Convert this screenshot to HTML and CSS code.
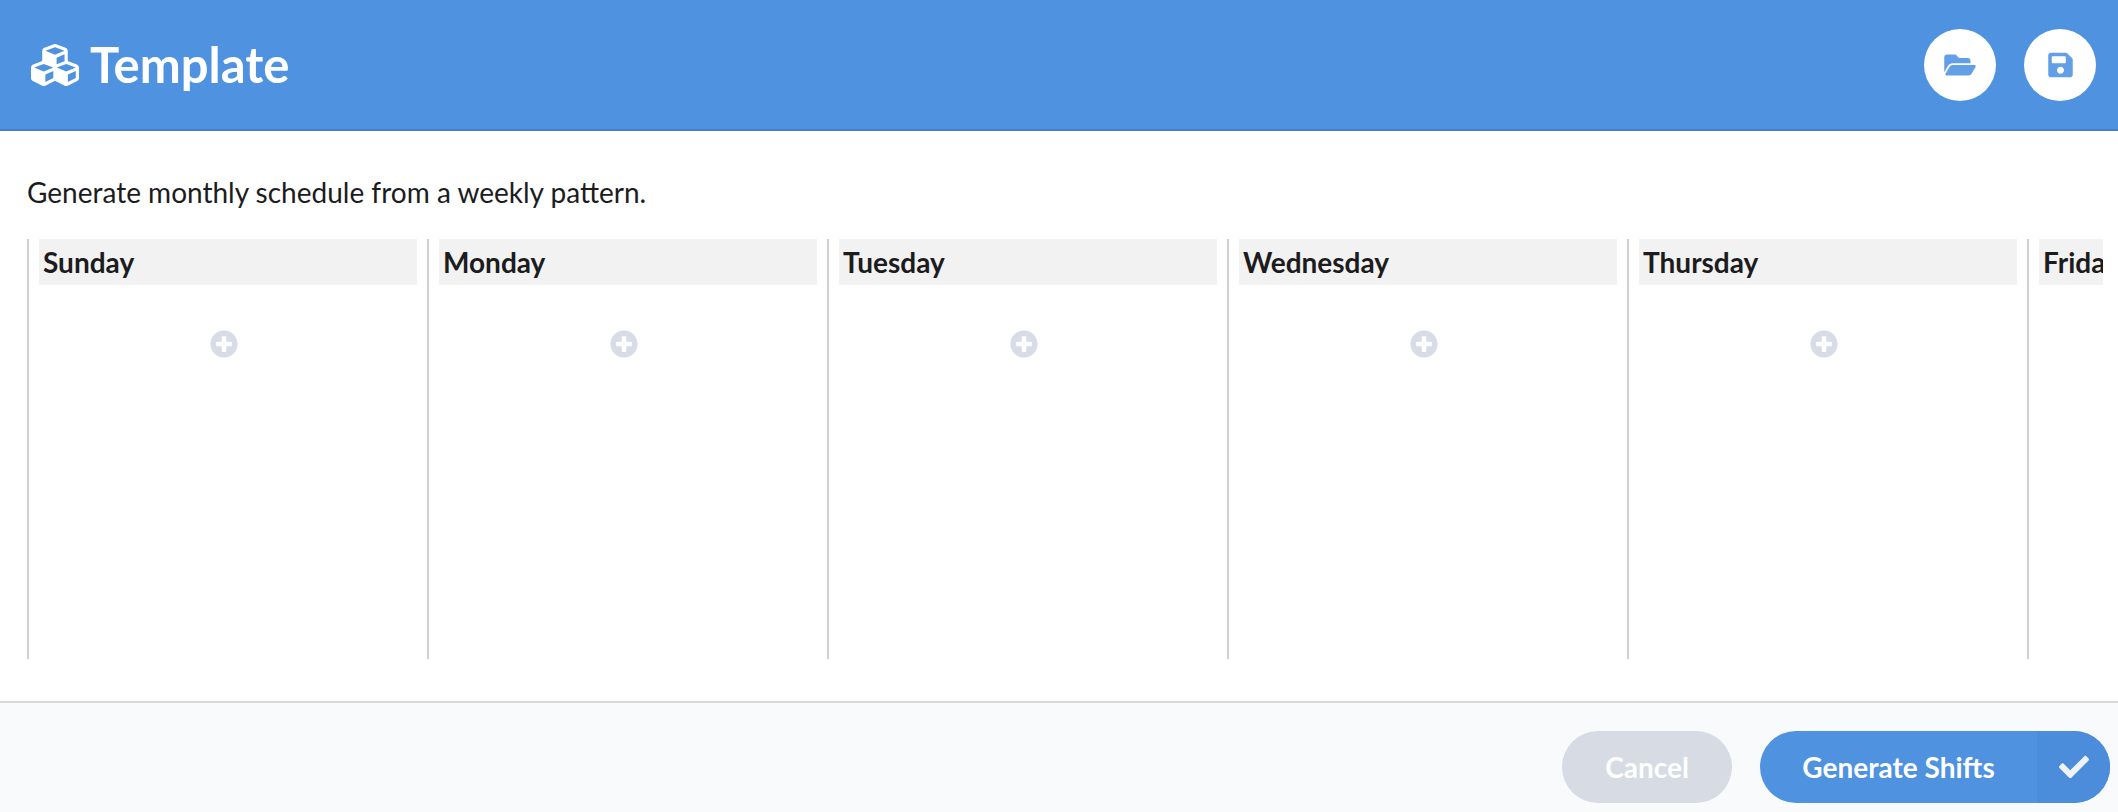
FILE: index.html
```html
<!DOCTYPE html>
<html lang="en">

<head>
    <meta charset="UTF-8">
    <title>Template</title>
    <link rel="stylesheet" href="styles.css">
</head>

<body>
    <div class="page">
        <header class="top_bar">
            <svg class="cubes_icon" viewBox="0 0 512 512">
                <path d="M488.6 250.2L392 214V105.5c0-15-9.3-28.4-23.4-33.7l-100-37.5c-8.1-3.1-17.1-3.1-25.3 0l-100 37.5c-14.1 5.3-23.4 18.7-23.4 33.7V214l-96.6 36.2C9.3 255.5 0 268.9 0 283.9V394c0 13.6 7.7 26.1 19.9 32.2l100 50c10.1 5.1 22.1 5.1 32.2 0l103.9-52 103.9 52c10.1 5.1 22.1 5.1 32.2 0l100-50c12.2-6.1 19.9-18.6 19.9-32.2V283.9c0-15-9.3-28.4-23.4-33.7zM358 214.8l-85 31.9v-68.2l85-37v73.3zM154 104.1l102-38.2 102 38.2v.6l-102 41.4-102-41.4v-.6zm84 291.1l-85 42.5v-79.1l85-38.8v75.4zm0-112l-102 41.4-102-41.4v-.6l102-38.2 102 38.2v.6zm240 112l-85 42.5v-79.1l85-38.8v75.4zm0-112l-102 41.4-102-41.4v-.6l102-38.2 102 38.2v.6z"/>
            </svg>
            <h1 class="title">Template</h1>
            <div class="top_actions">
                <div class="round_btn">
                    <svg class="folder_icon" viewBox="0 0 576 512">
                        <path d="M572.694 292.093L500.27 416.248A63.997 63.997 0 0 1 444.989 448H45.025c-18.523 0-30.064-20.093-20.731-36.093l72.424-124.155A64 64 0 0 1 152 256h399.964c18.523 0 30.064 20.093 20.73 36.093zM152 224h328v-48c0-26.51-21.49-48-48-48H272l-64-64H48C21.49 64 0 85.49 0 112v278.046l69.077-118.418C86.214 242.25 117.989 224 152 224z"/>
                    </svg>
                </div>
                <div class="round_btn">
                    <svg class="save_icon" viewBox="0 0 448 512">
                        <path d="M433.941 129.941l-83.882-83.882A48 48 0 0 0 316.118 32H48C21.49 32 0 53.49 0 80v352c0 26.51 21.49 48 48 48h352c26.51 0 48-21.49 48-48V163.882a48 48 0 0 0-14.059-33.941zM224 416c-35.346 0-64-28.654-64-64 0-35.346 28.654-64 64-64s64 28.654 64 64c0 35.346-28.654 64-64 64zm96-304.52V212c0 6.627-5.373 12-12 12H76c-6.627 0-12-5.373-12-12V108c0-6.627 5.373-12 12-12h228.52c3.183 0 6.235 1.264 8.485 3.515l3.48 3.48A11.996 11.996 0 0 1 320 111.48z"/>
                    </svg>
                </div>
            </div>
        </header>

        <main class="content">
            <p class="intro">Generate monthly schedule from a weekly pattern.</p>
            <div class="week">
                <section class="day">
                    <h2 class="day_name">Sunday</h2>
                    <svg class="add_icon" viewBox="0 0 512 512"><use href="#plus_circle"/></svg>
                </section>
                <section class="day">
                    <h2 class="day_name">Monday</h2>
                    <svg class="add_icon" viewBox="0 0 512 512"><use href="#plus_circle"/></svg>
                </section>
                <section class="day">
                    <h2 class="day_name">Tuesday</h2>
                    <svg class="add_icon" viewBox="0 0 512 512"><use href="#plus_circle"/></svg>
                </section>
                <section class="day">
                    <h2 class="day_name">Wednesday</h2>
                    <svg class="add_icon" viewBox="0 0 512 512"><use href="#plus_circle"/></svg>
                </section>
                <section class="day">
                    <h2 class="day_name">Thursday</h2>
                    <svg class="add_icon" viewBox="0 0 512 512"><use href="#plus_circle"/></svg>
                </section>
                <section class="day">
                    <h2 class="day_name">Friday</h2>
                    <svg class="add_icon" viewBox="0 0 512 512"><use href="#plus_circle"/></svg>
                </section>
            </div>
        </main>

        <footer class="bottom_bar">
            <div class="btn btn_cancel">Cancel</div>
            <div class="btn btn_generate">
                <span class="btn_label">Generate Shifts</span>
                <span class="btn_check">
                    <svg class="check_icon" viewBox="0 0 512 512">
                        <path d="M173.898 439.404l-166.4-166.4c-9.997-9.997-9.997-26.206 0-36.204l36.203-36.204c9.997-9.998 26.207-9.998 36.204 0L192 312.69 432.095 72.596c9.997-9.997 26.207-9.997 36.204 0l36.203 36.204c9.997 9.997 9.997 26.206 0 36.204l-294.4 294.401c-9.998 9.997-26.207 9.997-36.204-.001z"/>
                    </svg>
                </span>
            </div>
        </footer>
    </div>

    <svg class="icon_defs">
        <symbol id="plus_circle" viewBox="0 0 512 512">
            <path d="M256 8C119 8 8 119 8 256s111 248 248 248 248-111 248-248S393 8 256 8zm144 276c0 6.6-5.4 12-12 12h-92v92c0 6.6-5.4 12-12 12h-56c-6.6 0-12-5.4-12-12v-92h-92c-6.6 0-12-5.4-12-12v-56c0-6.6 5.4-12 12-12h92v-92c0-6.6 5.4-12 12-12h56c6.6 0 12 5.4 12 12v92h92c6.6 0 12 5.4 12 12v56z"/>
        </symbol>
    </svg>
</body>

</html>
```

FILE: styles.css
```css
html,
body {
    margin: 0;
    padding: 0;
    height: 100%;
    overflow: hidden;
    background-color: #ffffff;
    color: #1c1c1e;
    font-family: "Lato", "Liberation Sans", sans-serif;
}

.page {
    display: flex;
    flex-direction: column;
    height: 100vh;
}

.top_bar {
    display: flex;
    align-items: center;
    flex: none;
    box-sizing: border-box;
    height: 131px;
    padding: 0 22px 0 31px;
    background-color: #4f92e0;
    border-bottom: 2px solid #4680cc;
    color: #ffffff;
}

.cubes_icon {
    width: 48px;
    height: 48px;
    margin-right: 11px;
    fill: #ffffff;
}

.title {
    margin: 0;
    font-size: 49px;
    font-weight: 700;
    line-height: 1;
}

.top_actions {
    display: flex;
    gap: 28px;
    margin-left: auto;
}

.round_btn {
    display: flex;
    align-items: center;
    justify-content: center;
    width: 72px;
    height: 72px;
    border-radius: 50%;
    background-color: #ffffff;
}

.folder_icon {
    width: 32px;
    height: 28px;
    fill: #639fe6;
}

.save_icon {
    width: 25px;
    height: 28px;
    fill: #639fe6;
}

.content {
    flex: 1;
    min-height: 0;
    padding: 0 15px 0 27px;
}

.intro {
    box-sizing: border-box;
    margin: 0;
    padding-top: 44px;
    height: 108px;
    font-size: 28px;
    line-height: 34px;
}

.week {
    display: flex;
    height: 420px;
    overflow: hidden;
}

.day {
    display: flex;
    flex-direction: column;
    align-items: center;
    flex: none;
    box-sizing: border-box;
    width: 400px;
    padding: 0 10px;
    border-left: 2px solid #d0d0d0;
}

.day_name {
    align-self: stretch;
    box-sizing: border-box;
    height: 46px;
    margin: 0;
    padding-left: 4px;
    background-color: #f2f2f2;
    font-size: 28px;
    font-weight: 700;
    line-height: 46px;
    white-space: nowrap;
}

.add_icon {
    width: 28px;
    height: 28px;
    margin: 45px 8px 0 0;
    fill: #d7dce6;
}

.bottom_bar {
    display: flex;
    justify-content: flex-end;
    align-items: flex-start;
    flex: none;
    gap: 28px;
    box-sizing: border-box;
    height: 111px;
    padding: 28px 8px 0 0;
    background-color: #f9fafc;
    border-top: 2px solid #d8d8d8;
}

.btn {
    display: flex;
    align-items: center;
    height: 72px;
    border-radius: 36px;
    color: #ffffff;
    font-size: 28px;
    font-weight: 700;
}

.btn_cancel {
    justify-content: center;
    width: 170px;
    background-color: #d6dbe4;
}

.btn_generate {
    width: 350px;
    overflow: hidden;
    background-color: #4f92e0;
}

.btn_label {
    flex: 1;
    text-align: center;
}

.btn_check {
    display: flex;
    align-items: center;
    justify-content: center;
    flex: none;
    width: 73px;
    height: 100%;
    background-color: #4b8dda;
}

.check_icon {
    width: 30px;
    height: 30px;
    fill: #eef3fb;
}

.icon_defs {
    display: none;
}
```
